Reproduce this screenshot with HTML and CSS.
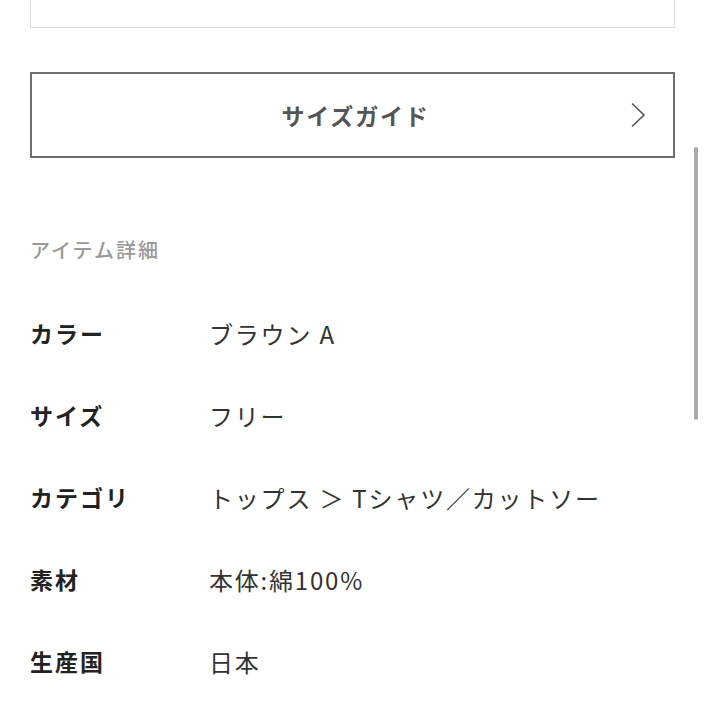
FILE: index.html
```html
<!DOCTYPE html>
<html lang="ja">
<head>
  <meta charset="UTF-8" />
  <meta name="viewport" content="width=device-width, initial-scale=1" />
  <title>アイテム詳細</title>
  <link rel="stylesheet" href="styles.css">
</head>
<body>
  <div class="page">
    <div class="top-card"></div>

    <a href="#" class="size-guide">
      <span class="size-guide-label">サイズガイド</span>
      <svg class="chevron" width="16" height="26" viewBox="0 0 16 26">
        <path d="M2 1.5 L14 13 L2 24.5" fill="none" stroke="#555" stroke-width="1.6" />
      </svg>
    </a>

    <section class="details">
      <h2 class="details-title">アイテム詳細</h2>
      <dl class="details-list">
        <dt>カラー</dt>
        <dd>ブラウン A</dd>

        <dt>サイズ</dt>
        <dd>フリー</dd>

        <dt>カテゴリ</dt>
        <dd>トップス ＞ Tシャツ／カットソー</dd>

        <dt>素材</dt>
        <dd>本体:綿100%</dd>

        <dt>生産国</dt>
        <dd>日本</dd>
      </dl>
    </section>
  </div>

  <!-- scroll indicator -->
  <div class="scroll-thumb"></div>
</body>
</html>
```

FILE: styles.css
```css
body {
  margin: 0;
  background: #fff;
  font-family: "Noto Sans CJK JP", "Noto Sans", sans-serif;
  color: #333;
  overflow: hidden;
}

.page {
  padding: 0 29px 0 30px;
}

.top-card {
  border: 1px solid #ddd;
  border-top: none;
  box-sizing: border-box;
  height: 28px;
}

.size-guide {
  display: flex;
  align-items: center;
  justify-content: center;
  position: relative;
  height: 86px;
  margin-top: 44px;
  border: 2px solid #6e6e6e;
  box-sizing: border-box;
  text-decoration: none;
}

.size-guide-label {
  font-size: 23px;
  font-weight: 700;
  letter-spacing: 1.8px;
  color: #555;
  margin-left: 6px;
}

.chevron {
  position: absolute;
  right: 27px;
  top: 28px;
}

.details-title {
  margin: 77px 0 0;
  font-size: 20px;
  line-height: 30px;
  font-weight: 500;
  letter-spacing: 2px;
  color: #999;
}

.details-list {
  display: grid;
  grid-template-columns: 179px 1fr;
  grid-auto-rows: 82px;
  align-items: center;
  margin: 27px 0 0;
}

.details-list dt {
  font-size: 23px;
  font-weight: 700;
  letter-spacing: 2px;
  color: #222;
}

.details-list dd {
  margin: 0;
  font-size: 24px;
  letter-spacing: 1.8px;
  color: #333;
}

.scroll-thumb {
  position: fixed;
  left: 694px;
  top: 147px;
  width: 4px;
  height: 273px;
  border-radius: 2px;
  background: #aaa;
}
```
